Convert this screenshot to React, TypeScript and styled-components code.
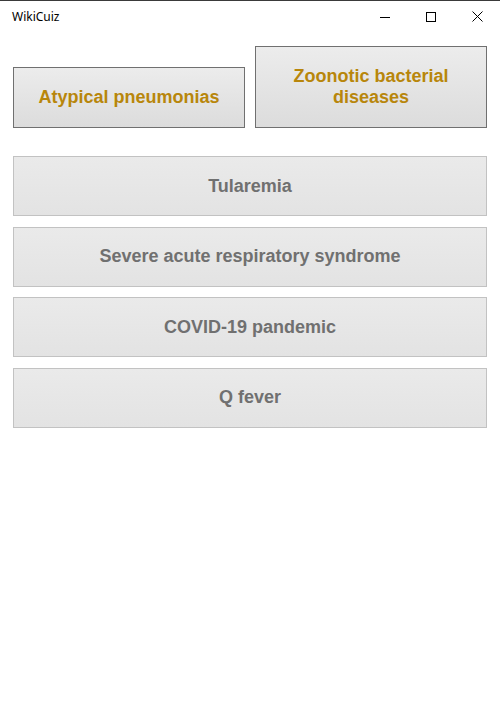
import React from "react";
import styled, { createGlobalStyle } from "styled-components";

const Global = createGlobalStyle`
  html, body { margin: 0; padding: 0; background: #ffffff; }
  body { width: 500px; height: 726px; overflow: hidden; }
`;

const Window = styled.div`
  width: 500px;
  height: 726px;
  box-sizing: border-box;
  border-top: 1px solid #3a3a3a;
  display: flex;
  flex-direction: column;
`;

const TitleBar = styled.div`
  height: 31px;
  display: flex;
  align-items: center;
  justify-content: space-between;
  padding-left: 12px;
`;

const Title = styled.span`
  font-family: "Noto Sans", "Open Sans", sans-serif;
  font-size: 12px;
  color: #000;
`;

const Controls = styled.div`
  display: flex;
  height: 100%;
`;

const Ctrl = styled.div`
  width: 46px;
  height: 100%;
  display: flex;
  align-items: center;
  justify-content: center;
`;

const Content = styled.div`
  padding: 14px 13px 0 13px;
  display: flex;
  flex-direction: column;
`;

const TopRow = styled.div`
  display: flex;
  align-items: flex-end;
  gap: 10px;
`;

const CategoryButton = styled.button<{ $h: number }>`
  width: 232px;
  height: ${(p) => p.$h}px;
  box-sizing: border-box;
  border: 1px solid #707070;
  background: linear-gradient(#ececec, #dcdcdc);
  color: #b8860b;
  font-family: "Liberation Sans", Arial, sans-serif;
  font-weight: bold;
  font-size: 18px;
  line-height: 21px;
  padding: 0 20px;
  text-align: center;
`;

const List = styled.div`
  margin-top: 28px;
  display: flex;
  flex-direction: column;
  gap: 10.5px;
`;

const ItemButton = styled.button`
  width: 474px;
  height: 60px;
  box-sizing: border-box;
  border: 1px solid #c2c2c2;
  background: linear-gradient(#eaeaea, #e3e3e3);
  color: #707070;
  font-family: "Liberation Sans", Arial, sans-serif;
  font-weight: bold;
  font-size: 18px;
  text-align: center;
`;

const items = [
  "Tularemia",
  "Severe acute respiratory syndrome",
  "COVID-19 pandemic",
  "Q fever",
];

export default function App() {
  return (
    <>
      <Global />
      <Window>
        <TitleBar>
          <Title>WikiCuiz</Title>
          <Controls>
            <Ctrl>
              <svg width="10" height="10" viewBox="0 0 10 10">
                <line x1="0" y1="5.5" x2="10" y2="5.5" stroke="#000" strokeWidth="1" />
              </svg>
            </Ctrl>
            <Ctrl>
              <svg width="10" height="10" viewBox="0 0 10 10">
                <rect x="0.5" y="0.5" width="9" height="9" fill="none" stroke="#000" strokeWidth="1" />
              </svg>
            </Ctrl>
            <Ctrl>
              <svg width="11" height="11" viewBox="0 0 11 11">
                <path d="M0.5 0.5 L10.5 10.5 M10.5 0.5 L0.5 10.5" stroke="#000" strokeWidth="1" />
              </svg>
            </Ctrl>
          </Controls>
        </TitleBar>
        <Content>
          <TopRow>
            <CategoryButton $h={61}>Atypical pneumonias</CategoryButton>
            <CategoryButton $h={82}>Zoonotic bacterial diseases</CategoryButton>
          </TopRow>
          <List>
            {items.map((t) => (
              <ItemButton key={t}>{t}</ItemButton>
            ))}
          </List>
        </Content>
      </Window>
    </>
  );
}
